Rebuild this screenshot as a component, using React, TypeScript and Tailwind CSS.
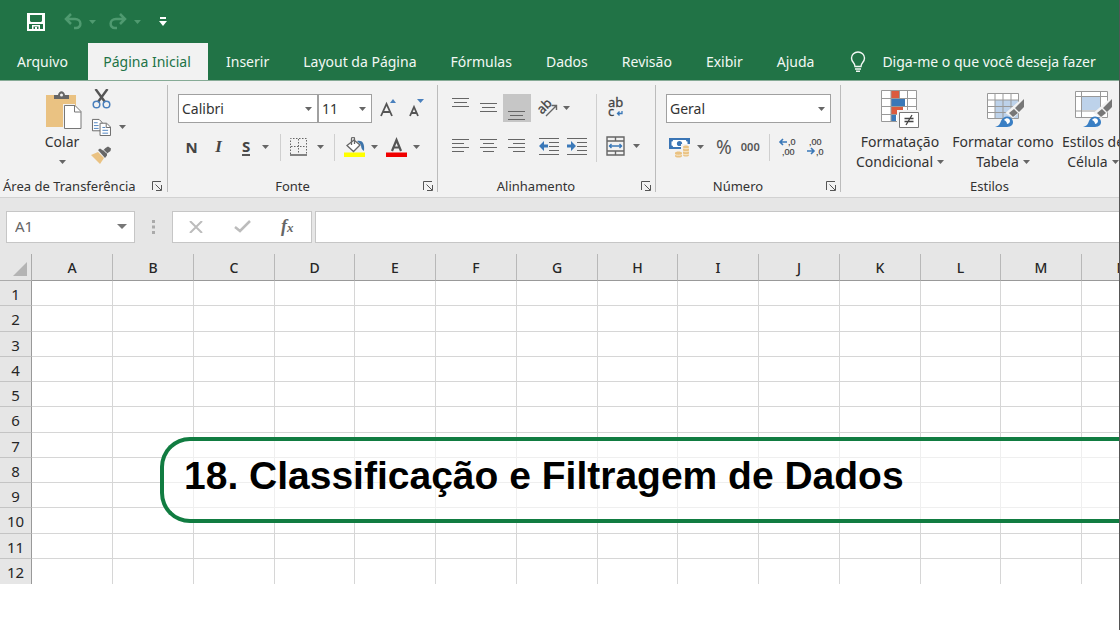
import React from "react";

type Kids = { children?: React.ReactNode; className?: string };

const Caret = ({ className = "fill-[#666]" }: { className?: string }) => (
  <svg width="7" height="4" viewBox="0 0 7 4" className={"shrink-0 " + className} aria-hidden="true">
    <path d="M0 0h7L3.500 4z" />
  </svg>
);

const IconButton = ({ label, children, className = "" }: Kids & { label: string }) => (
  <button type="button" aria-label={label} className={"flex h-7 shrink-0 items-center justify-center " + className}>
    {children}
  </button>
);

const Launcher = ({ label }: { label: string }) => (
  <button type="button" aria-label={label} className="shrink-0">
    <svg width="10" height="10" viewBox="0 0 10 10" fill="none" stroke="#555">
      <path d="M.5 9V.5H9M3.500 3.500l5.500 5.500M9.500 4v5.500H4" />
    </svg>
  </button>
);

const Group = ({
  title,
  children,
  className = "",
  titleClass = "text-center pr-4",
  launcher = true,
}: Kids & { title: string; titleClass?: string; launcher?: boolean }) => (
  <section aria-label={title} className={"flex shrink-0 flex-col " + className}>
    <div className="h-[91px]">{children}</div>
    <div className="flex h-5 items-center">
      <h2 className={"flex-1 text-[13px] leading-5 whitespace-nowrap " + titleClass}>{title}</h2>
      {launcher && <Launcher label={"Opções de " + title} />}
    </div>
  </section>
);

const Separator = ({ className = "h-[27px]" }: { className?: string }) => (
  <span className={"w-px shrink-0 bg-[#cfcfcf] " + className} />
);

const GroupLine = () => <div className="h-[107px] w-px shrink-0 bg-[#bcbcbc]" />;

const Lines = ({ d }: { d: string }) => (
  <svg width="18" height="14" viewBox="0 0 18 14" fill="none" stroke="#666">
    <path d={d} />
  </svg>
);

const Brush = () => (
  <g>
    <path d="M38 8v9L27 27l-6-4z" fill="#f2f2f2" stroke="#f2f2f2" strokeWidth="2" />
    <path d="M38 9v8l-5 5-4-4zM28 19l4 4-5 4-4-4z" fill="#777" />
    <path d="M9 37c4-1 5-3 6-6 2-5 8-6 11-2 3 5-1 8-5 8z" fill="#3a7fc4" />
    <path d="M18 30c2-3 6-2 6 1 0 2-2 3-3 3 0-2-1-3-3-4z" fill="#fff" />
  </g>
);

const tabs = ["Inserir", "Layout da Página", "Fórmulas", "Dados", "Revisão", "Exibir", "Ajuda"];
const columns = "ABCDEFGHIJKLMN".split("");
const rows = Array.from({ length: 12 }, (_, i) => i + 1);

function TitleBar() {
  return (
    <div className="flex h-[43px] items-center pl-[27px]">
      <button type="button" aria-label="Salvar">
        <svg width="18" height="18" viewBox="0 0 18 18">
          <path fillRule="evenodd" fill="#fff" d="M0 0h18v18H0zM3 2v6l1 1h10l1-1V2zM2 11v5h3v-4h8v4h3v-5zM6.500 13.500V16H8v-2h2v2h1.500v-2.500z" />
        </svg>
      </button>
      <button type="button" aria-label="Desfazer" className="ml-[19px] flex items-center gap-[7px]">
        <svg width="18" height="17" viewBox="0 0 18 17" fill="none" stroke="#4f9a70" strokeWidth="2.500">
          <path d="M7 1L2 6l5 5M2 6h9c7 0 7 9 1 9h-2" />
        </svg>
        <Caret className="fill-[#4f9a70]" />
      </button>
      <button type="button" aria-label="Refazer" className="ml-[13px] flex items-center gap-[7px]">
        <svg width="18" height="17" viewBox="0 0 18 17" fill="none" stroke="#4f9a70" strokeWidth="2.500">
          <path d="M11 1l5 5-5 5M16 6H7c-7 0-7 9-1 9h2" />
        </svg>
        <Caret className="fill-[#4f9a70]" />
      </button>
      <button type="button" aria-label="Personalizar barra de acesso rápido" className="ml-[18px]">
        <svg width="8" height="9" viewBox="0 0 8 9" fill="#fff">
          <path d="M1 0h6v2H1zM0 4h8L4 9z" />
        </svg>
      </button>
    </div>
  );
}

function TabBar() {
  return (
    <nav aria-label="Guias" className="flex h-[37px] items-stretch text-[14px] whitespace-nowrap text-[#f2f8f4]">
      <button type="button" className="w-[88px] shrink-0 pr-[3px]">Arquivo</button>
      <button type="button" aria-current="page" className="w-[120px] shrink-0 bg-[#f2f2f2] pr-[2px] text-[#217346]">
        Página Inicial
      </button>
      <div className="flex shrink-0 gap-[34px] pl-[18px]">
        {tabs.map((t) => (
          <button type="button" key={t}>
            {t}
          </button>
        ))}
      </div>
      <button type="button" className="flex shrink-0 items-center gap-4 pl-9">
        <svg width="16" height="21" viewBox="0 0 16 21" fill="none" stroke="#f2f8f4" strokeWidth="1.400">
          <path d="M5 15.500c0-4-3.500-4-3.500-8.500a6.500 6 0 0 1 13 0c0 4.500-3.500 4.500-3.500 8.500zM5 18h6M6 20.300h4" />
        </svg>
        Diga-me o que você deseja fazer
      </button>
    </nav>
  );
}

function Clipboard() {
  return (
    <Group title="Área de Transferência" titleClass="text-left" className="w-[167px] pr-[5px] pl-[3px]">
      <div className="flex pl-[38px]">
        <button type="button" className="flex w-[42px] flex-col items-center pt-[6px]">
          <svg width="36" height="38" viewBox="0 0 36 38" className="ml-1">
            <path d="M0 4h30v32H0z" fill="#eac282" />
            <path d="M8 8V4h4c1-5 6-5 7 0h4v4z" fill="#666" />
            <circle cx="15.500" cy="4" r="1.500" fill="#f2f2f2" />
            <path d="M17 13h12v5h6v20H17z" fill="#f2f2f2" />
            <path d="M18.500 14.500H29l6 6v17H18.500z" fill="#fff" stroke="#777" />
            <path d="M28.500 15v6H35" fill="none" stroke="#777" />
          </svg>
          <span className="mt-[3px] text-[14px] leading-5">Colar</span>
          <span className="flex h-3 items-end"><Caret /></span>
        </button>
        <div className="ml-2 flex flex-col">
          <IconButton label="Recortar" className="w-5">
            <svg width="19" height="20" viewBox="0 0 19 20" fill="none">
              <path d="M3.500 0L13 13M15.500 0L6 13" stroke="#555" strokeWidth="2.400" />
              <circle cx="4.500" cy="15.500" r="3.300" stroke="#4a80bd" strokeWidth="1.500" />
              <circle cx="14.500" cy="15.500" r="3.300" stroke="#4a80bd" strokeWidth="1.500" />
            </svg>
          </IconButton>
          <IconButton label="Copiar" className="w-[35px] justify-between gap-2">
            <svg width="20" height="18" viewBox="0 0 21 19" fill="#fff" stroke="#666">
              <path d="M1.500 1.500h7l3 3v9h-10z" />
              <path d="M9.500 5.500h7l4 4v9h-11z" />
              <path d="M16 6v4h4" fill="none" />
              <path d="M3 5h4M3 8h5M3 11h5M12 10h3M12 13h6M12 16h6" stroke="#4a80bd" />
            </svg>
            <Caret />
          </IconButton>
          <IconButton label="Pincel de formatação" className="w-5">
            <svg width="20" height="18" viewBox="0 0 20 18">
              <path d="M0 9l7-3 6 6-4 6z" fill="#eac282" />
              <path d="M7 4l2-1.500 3 2L14.500 2 17 0.500 20 2.500 19.500 5 16 7.500v2L14 12z" fill="#666" />
              <path d="M12 3.500l4 4" stroke="#f2f2f2" />
            </svg>
          </IconButton>
        </div>
      </div>
    </Group>
  );
}

function Picker({ label, value, className }: { label: string; value: string; className: string }) {
  return (
    <label className={"flex h-[29px] items-center justify-between border border-[#a0a0a0] bg-white pr-[5px] " + className}>
      <select aria-label={label} className="w-full appearance-none bg-transparent pl-[3px] text-[14px] outline-none">
        <option>{value}</option>
      </select>
      <Caret />
    </label>
  );
}

function FontGroup() {
  return (
    <Group title="Fonte" className="w-[269px] pr-1 pl-[10px]">
      <div className="flex items-center pt-[9px]">
        <Picker label="Fonte" value="Calibri" className="w-[140px]" />
        <Picker label="Tamanho" value="11" className="w-[54px]" />
        <IconButton label="Aumentar fonte" className="ml-2 w-[18px]">
          <svg width="18" height="20" viewBox="0 0 18 20">
            <path d="M1 17L6.500 5 12 17M3 13h7" stroke="#555" strokeWidth="1.800" fill="none" />
            <path d="M10 4l3-4 3 4z" fill="#4a80bd" />
          </svg>
        </IconButton>
        <IconButton label="Diminuir fonte" className="ml-[10px] w-[18px]">
          <svg width="18" height="20" viewBox="0 0 18 20">
            <path d="M2 17l4-9 4 9M3 14h6" stroke="#555" strokeWidth="1.800" fill="none" />
            <path d="M9 0h7l-3.500 4z" fill="#4a80bd" />
          </svg>
        </IconButton>
      </div>
      <div className="flex items-center pt-[10px] text-[15px] text-[#444]">
        <IconButton label="Negrito" className="w-[27px] font-bold">N</IconButton>
        <IconButton label="Itálico" className="w-[27px] font-['Liberation_Serif',serif] text-[17px] font-bold italic">I</IconButton>
        <IconButton label="Sublinhado" className="ml-[10px] gap-3">
          <span className="border-b-2 border-[#555] text-[15px] leading-4 font-bold">S</span>
          <Caret />
        </IconButton>
        <Separator className="ml-[11px] h-[27px]" />
        <IconButton label="Bordas" className="ml-[9px] gap-[10px]">
          <svg width="17" height="18" viewBox="0 0 17 18" fill="none" stroke="#666">
            <path d="M.5 16V.5h16V16M8.500 1v15M1 8.500h15" strokeDasharray="1.500 1.500" />
            <path d="M0 17h17" strokeWidth="1.600" />
          </svg>
          <Caret />
        </IconButton>
        <Separator className="ml-[10px] h-[27px]" />
        <IconButton label="Cor de preenchimento" className="ml-[9px] gap-[6px]">
          <svg width="21" height="20" viewBox="0 0 21 20">
            <path d="M0 15.500h21V20H0z" fill="#ffff00" />
            <path d="M13 4c5-1 8 2 7 10-2-1-3-3-3-6z" fill="#3e74aa" />
            <path d="M3 8.500L10 3l6 5-6.500 6.500z" fill="#fff" stroke="#666" strokeWidth="1.300" />
            <path d="M7.500 8V2c0-2.500 3-2.500 3 0v5" fill="none" stroke="#666" strokeWidth="1.300" />
          </svg>
          <Caret />
        </IconButton>
        <IconButton label="Cor da fonte" className="ml-2 gap-[6px]">
          <svg width="21" height="20" viewBox="0 0 21 20">
            <path d="M0 15.500h21V20H0z" fill="#f00000" />
            <path d="M6 14l4.500-11L15 14M7.500 10.500h6" stroke="#555" strokeWidth="2.200" fill="none" />
          </svg>
          <Caret />
        </IconButton>
      </div>
    </Group>
  );
}

function Indent({ d }: { d: string }) {
  return (
    <svg width="20" height="17" viewBox="0 0 20 17" fill="none">
      <path d="M0 .5h20M10 4.500h10M10 8.500h10M10 12.500h10M0 16.500h20" stroke="#666" />
      <path d={d} fill="#3a78b8" />
    </svg>
  );
}

function Alignment() {
  return (
    <Group title="Alinhamento" className="w-[217px] pr-1 pl-[9px]">
      <div className="flex h-full items-start">
        <div className="flex w-[149px] shrink-0 flex-col">
          <div className="flex items-center pt-[9px]">
            <IconButton label="Alinhar acima" className="w-7 pb-2"><Lines d="M0 1.500h17M2 5.500h13M0 9.500h17" /></IconButton>
            <IconButton label="Alinhar no meio" className="w-7"><Lines d="M0 2.500h17M2 6.500h13M0 10.500h17" /></IconButton>
            <IconButton label="Alinhar abaixo" className="w-7 bg-[#c6c6c6] pt-4"><Lines d="M0 2.500h17M2 6.500h13M0 10.500h17" /></IconButton>
            <IconButton label="Orientação" className="ml-[6px] gap-[5px]">
              <svg width="21" height="20" viewBox="0 0 21 20" className="overflow-visible">
                <text x="0" y="13" transform="rotate(-45 7 9)" fontSize="13" fill="#444" stroke="#444" strokeWidth=".3">ab</text>
                <path d="M9 18L19 8M14.500 7.500H19.500V12" stroke="#666" strokeWidth="1.400" fill="none" />
              </svg>
              <Caret />
            </IconButton>
          </div>
          <div className="flex items-center pt-[10px]">
            <IconButton label="Alinhar à esquerda" className="w-7"><Lines d="M0 .5h17M0 4.500h12M0 8.500h17M0 12.500h12" /></IconButton>
            <IconButton label="Centralizar" className="w-7"><Lines d="M0 .5h17M3 4.500h11M0 8.500h17M3 12.500h11" /></IconButton>
            <IconButton label="Alinhar à direita" className="w-7"><Lines d="M0 .5h17M5 4.500h12M0 8.500h17M5 12.500h12" /></IconButton>
            <IconButton label="Diminuir recuo" className="ml-2 w-5"><Indent d="M0 8l5-5v3.500h4v3H5V13z" /></IconButton>
            <IconButton label="Aumentar recuo" className="ml-2 w-5"><Indent d="M9 8L4 3v3.500H0v3h4V13z" /></IconButton>
          </div>
        </div>
        <Separator className="mt-[9px] h-[68px]" />
        <div className="flex flex-col pl-[9px]">
          <IconButton label="Quebrar texto automaticamente" className="mt-[9px] w-[18px]">
            <svg width="18" height="22" viewBox="0 0 18 22" className="overflow-visible">
              <text x="2" y="10" fontSize="13" fill="#444" stroke="#444" strokeWidth=".3">ab</text>
              <text x="2" y="19" fontSize="13" fill="#444" stroke="#444" strokeWidth=".3">c</text>
              <path d="M16 14v2.500h-4.500M13.500 14.500l-2 2 2 2" stroke="#3a78b8" strokeWidth="1.300" fill="none" />
            </svg>
          </IconButton>
          <IconButton label="Mesclar e centralizar" className="mt-[10px] gap-2">
            <svg width="19" height="20" viewBox="0 0 19 20" fill="none" stroke="#666" strokeWidth="1.400">
              <path d="M1 1h17v18H1zM1 5h17M1 15h17M9.500 1v4M9.500 15v4" />
              <path d="M3 10h13M5.500 8l-2 2 2 2M13.500 8l2 2-2 2" stroke="#3a78b8" />
            </svg>
            <Caret />
          </IconButton>
        </div>
      </div>
    </Group>
  );
}

function Decimals({ increase }: { increase?: boolean }) {
  return (
    <svg
      width="20"
      height="20"
      viewBox="0 0 20 20"
      fill="#444"
      stroke="#444"
      strokeWidth=".2"
      className="overflow-visible font-['Liberation_Sans',sans-serif] text-[9px]"
    >
      <text x={increase ? 10 : 3} y="8">{increase ? ",0" : ",00"}</text>
      <text x={increase ? 4 : 10} y="18">{increase ? ",00" : ",0"}</text>
      <path d={increase ? "M9 5H2M5 2L2 5l3 3" : "M1 14h7M5 11l3 3-3 3"} fill="none" stroke="#3a78b8" strokeWidth="1.600" />
    </svg>
  );
}

function NumberGroup() {
  return (
    <Group title="Número" className="w-[184px] pr-1 pl-[10px]">
      <div className="flex pt-[9px]">
        <Picker label="Formato de número" value="Geral" className="w-[165px]" />
      </div>
      <div className="flex items-center pt-[10px] pl-[3px] text-[#555]">
        <IconButton label="Formato de contabilização" className="gap-[7px]">
          <svg width="21" height="21" viewBox="0 0 21 21">
            <path d="M0 1h21v11H0z" fill="#3a75b5" />
            <path d="M4 3h13c0 1 .5 1.500 1.500 1.500v4C17.500 8.500 17 9 17 10H4c0-1-.5-1.500-1.500-1.500v-4C3.500 4.500 4 4 4 3z" fill="#fff" />
            <circle cx="10.500" cy="6.500" r="2.600" fill="#3a75b5" />
            <path d="M12 7h9v13h-6v1H5v-7h7z" fill="#f2f2f2" />
            <path d="M14 10c0-2 6-2 6 0v8c0 2-6 2-6 0zM6 16c0-2 7-2 7 0v3c0 2-7 2-7 0z" fill="#eac282" />
            <path d="M14 11c1 1 5 1 6 0M14 14c1 1 5 1 6 0M14 17c1 1 5 1 6 0M6 17.500c1 1 6 1 7 0" stroke="#f7ead2" fill="none" />
          </svg>
          <Caret />
        </IconButton>
        <IconButton label="Porcentagem" className="ml-3 text-[19px]">%</IconButton>
        <IconButton label="Separador de milhares" className="ml-[9px] text-[11px] font-semibold">000</IconButton>
        <Separator className="ml-[9px] h-[27px]" />
        <IconButton label="Aumentar casas decimais" className="ml-2"><Decimals increase /></IconButton>
        <IconButton label="Diminuir casas decimais" className="ml-2"><Decimals /></IconButton>
      </div>
    </Group>
  );
}

function StyleButton({ first, second, icon, className }: { first: string; second: string; icon: React.ReactNode; className: string }) {
  return (
    <button type="button" className={"flex shrink-0 flex-col items-center pt-[5px] text-[14px] leading-5 whitespace-nowrap " + className}>
      {icon}
      <span className="mt-1">{first}</span>
      <span className="flex items-center gap-1">{second}<Caret /></span>
    </button>
  );
}

function Styles() {
  return (
    <Group title="Estilos" launcher={false} titleClass="text-center" className="w-[295px] pr-2 pl-[10px]">
      <div className="flex">
        <StyleButton
          first="Formatação"
          second="Condicional"
          className="w-[98px]"
          icon={
            <svg width="38" height="38" viewBox="0 0 38 38">
              <path d="M.5.500h35v31H.5z" fill="#fff" />
              <path d="M10 0h8v8h-8zM10 16h12v8H10z" fill="#db5b3e" />
              <path d="M10 9h14v7H10zM10 24h5v8h-5z" fill="#3a78b8" />
              <path d="M.5.500h35v31H.5zM10 0v32M18.500 0v9M26.500 0v32M0 8.500h36M0 16.500h36M0 24.500h36" stroke="#999" fill="none" />
              <path d="M16 20h22v18H16z" fill="#f2f2f2" />
              <path d="M18.500 22.500h19v15h-19z" fill="#fff" stroke="#777" />
              <path d="M23.500 28.500h9M23.500 31.500h9M31 25l-6 10" stroke="#444" strokeWidth="1.300" />
            </svg>
          }
        />
        <StyleButton
          first="Formatar como"
          second="Tabela"
          className="w-[108px]"
          icon={
            <svg width="38" height="38" viewBox="0 0 38 38" className="ml-1">
              <path d="M1.500 3.500h31v25h-31z" fill="#fff" />
              <path d="M9 10h24v18H9z" fill="#bdd2ea" />
              <path d="M1.500 3.500h31v25h-31zM9 3v26M17 3v26M25 3v26M1 10h32M1 16.500h32M1 22.500h32" stroke="#999" fill="none" />
              <Brush />
            </svg>
          }
        />
        <StyleButton
          first="Estilos de"
          second="Célula"
          className="w-[72px]"
          icon={
            <svg width="38" height="38" viewBox="0 0 38 38">
              <path d="M1.500 1.500h32v26h-32z" fill="#fff" />
              <path d="M8 7h18v13H8z" fill="#bdd2ea" />
              <path d="M1.500 1.500h32v26h-32zM7.500 1v27M26.500 1v27M1 6.500h33M1 21h33" stroke="#999" fill="none" />
              <Brush />
            </svg>
          }
        />
      </div>
    </Group>
  );
}

function FormulaBar() {
  return (
    <div className="flex h-[57px] items-center border-t border-[#d2d2d2] bg-[#e6e6e6] pt-px pl-[6px] text-[#666]">
      <label className="flex h-8 w-[129px] shrink-0 items-center border border-[#c6c6c6] bg-white pr-[7px] pl-2">
        <input aria-label="Caixa de nome" defaultValue="A1" className="w-full min-w-0 bg-transparent text-[15px] outline-none" />
        <svg width="10" height="5" viewBox="0 0 10 5" className="shrink-0 fill-[#777]" aria-hidden="true"><path d="M0 0h10L5 5z" /></svg>
      </label>
      <svg width="4" height="14" viewBox="0 0 4 14" className="ml-[17px] shrink-0 fill-[#aaa]" aria-hidden="true">
        <path d="M0 0h3v3H0zM0 5.500h3v3H0zM0 11h3v3H0z" />
      </svg>
      <div className="ml-4 flex h-8 w-[140px] shrink-0 items-center border border-[#c6c6c6] bg-white pl-4">
        <button type="button" aria-label="Cancelar">
          <svg width="14" height="12" viewBox="0 0 14 12" fill="none" stroke="#bcbcbc" strokeWidth="2"><path d="M1 0l12 12M13 0L1 12" /></svg>
        </button>
        <button type="button" aria-label="Inserir" className="ml-[31px]">
          <svg width="17" height="13" viewBox="0 0 17 13" fill="none" stroke="#bcbcbc" strokeWidth="2.500"><path d="M1 7l5 4L16 1" /></svg>
        </button>
        <button type="button" aria-label="Inserir função" className="ml-[30px] flex items-baseline font-['Liberation_Serif',serif] text-[18px] leading-5 font-bold italic">
          f<span className="text-[13px]">x</span>
        </button>
      </div>
      <input aria-label="Barra de fórmulas" className="ml-[3px] h-8 min-w-0 flex-1 border border-r-0 border-[#c6c6c6] bg-white px-2 outline-none" />
    </div>
  );
}

function Sheet() {
  return (
    <table className="w-[1163px] table-fixed border-separate border-spacing-0 text-[15px] text-[#262626]">
      <colgroup>
        <col className="w-8" />
        {columns.map((c, i) => (
          <col key={c} className={i % 4 === 3 ? "w-[80px]" : "w-[81px]"} />
        ))}
      </colgroup>
      <thead>
        <tr className="h-[27px] bg-[#e6e6e6]">
          <th aria-label="Selecionar tudo" className="border-r border-b border-[#ababab] p-0">
            <svg width="16" height="16" viewBox="0 0 16 16" className="mt-1 ml-3 fill-[#b4b4b4]"><path d="M15 1v14H1z" /></svg>
          </th>
          {columns.map((c) => (
            <th key={c} scope="col" className="border-r border-b border-r-[#b8b8b8] border-b-[#999] p-0 pt-[2px] text-[14px] leading-5 font-medium">
              {c}
            </th>
          ))}
        </tr>
      </thead>
      <tbody className="[&>tr:last-child>*]:border-b-0">
        {rows.map((r) => (
          <tr key={r} className={r % 4 === 2 ? "h-[26px]" : "h-[25px]"}>
            <th scope="row" className="border-r border-b border-r-[#999] border-b-[#c4c4c4] bg-[#e6e6e6] p-0 pt-px leading-5 font-normal">
              {r}
            </th>
            {columns.map((c) => (
              <td key={c} className="border-r border-b border-[#d6d6d6] p-0" />
            ))}
          </tr>
        ))}
      </tbody>
    </table>
  );
}

export default function App() {
  return (
    <main className="min-h-screen overflow-hidden border-r border-[#555] bg-white font-['Noto_Sans',sans-serif] text-[#333]">
      <header className="bg-[#217346]">
        <TitleBar />
        <TabBar />
      </header>
      <div className="flex h-[117px] overflow-hidden border-t border-[#86ab96] bg-[#f2f2f2] pt-1">
        <div className="flex">
          <Clipboard />
          <GroupLine />
          <FontGroup />
          <GroupLine />
          <Alignment />
          <GroupLine />
          <NumberGroup />
          <GroupLine />
          <Styles />
        </div>
      </div>
      <FormulaBar />
      <div className="relative overflow-hidden">
        <Sheet />
        <div className="absolute top-[183px] right-0 left-40 flex h-[86px] items-center rounded-l-[30px] border-4 border-r-0 border-[#117c41] bg-white/60 pb-2 pl-5">
          <h1 className="font-['Liberation_Sans',sans-serif] text-[39px] leading-[48px] font-bold whitespace-nowrap text-black">
            18. Classificação e Filtragem de Dados
          </h1>
        </div>
      </div>
    </main>
  );
}
